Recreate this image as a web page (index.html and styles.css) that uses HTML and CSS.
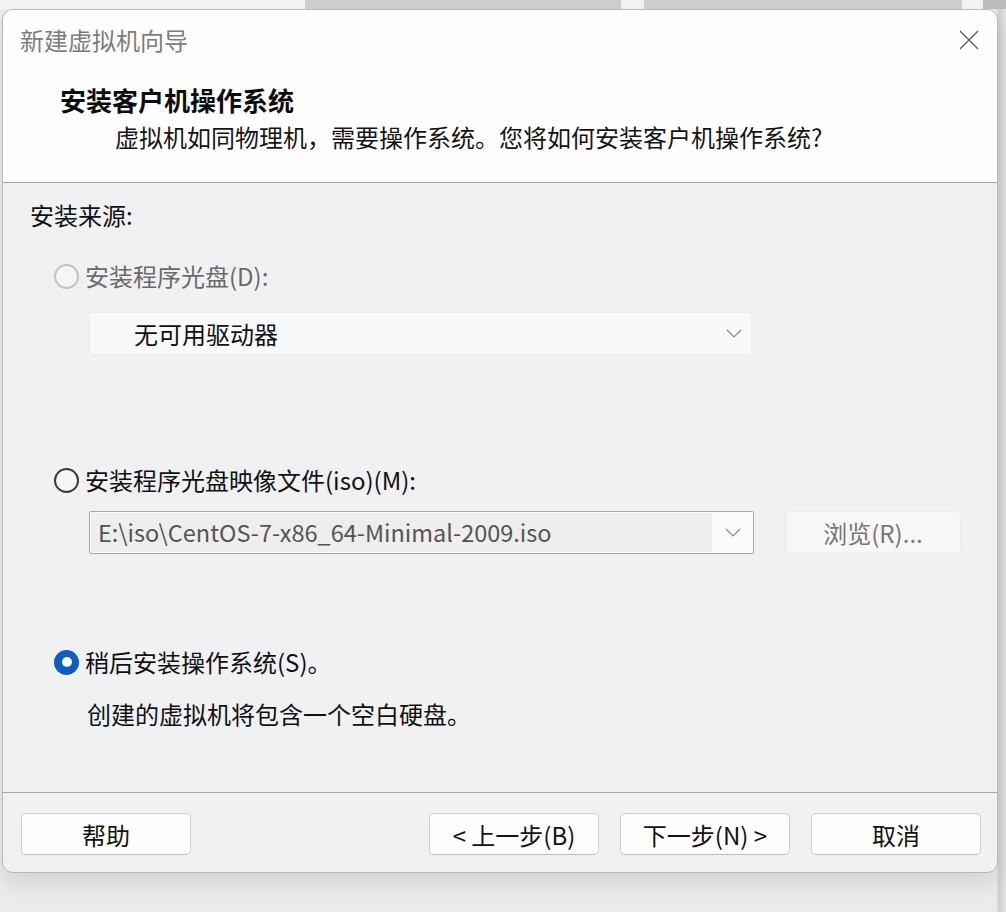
FILE: index.html
```html
<!DOCTYPE html>
<html lang="zh-CN">
<head>
<meta charset="utf-8">
<title>新建虚拟机向导</title>
<link rel="stylesheet" href="styles.css">
</head>
<body>
<div class="topstrip">
  <div class="strip-gap a"></div>
  <div class="strip-block b1"></div>
  <div class="strip-gap c"></div>
  <div class="strip-block b2"></div>
  <div class="strip-gap d"></div>
  <div class="strip-block b3"></div>
</div>
<div class="stage">
  <div class="dialog">
    <div class="header">
      <div class="titlebar">
        <span class="title">新建虚拟机向导</span>
        <svg class="close" width="20" height="20" viewBox="0 0 20 20"><path d="M1 1 L19 19 M19 1 L1 19" stroke="#5a5a5a" stroke-width="1.3" fill="none"/></svg>
      </div>
      <div class="heading">安装客户机操作系统</div>
      <div class="subtitle">虚拟机如同物理机，需要操作系统。您将如何安装客户机操作系统?</div>
    </div>
    <div class="body">
      <div class="section-label">安装来源:</div>
      <div class="radio-row r1">
        <span class="radio disabled"></span>
        <span class="radio-label muted">安装程序光盘(D):</span>
      </div>
      <div class="select disabled-select">
        <span class="select-text">无可用驱动器</span>
        <svg class="chev" width="16" height="9" viewBox="0 0 16 9"><path d="M1 1 L8 8 L15 1" stroke="#8a8a8a" stroke-width="1.2" fill="none"/></svg>
      </div>
      <div class="radio-row r2">
        <span class="radio"></span>
        <span class="radio-label">安装程序光盘映像文件(iso)(M):</span>
      </div>
      <div class="iso-row">
        <div class="combo">
          <span class="combo-text">E:\iso\CentOS-7-x86_64-Minimal-2009.iso</span>
          <span class="combo-btn"><svg width="16" height="9" viewBox="0 0 16 9"><path d="M1 1 L8 8 L15 1" stroke="#8a8a8a" stroke-width="1.2" fill="none"/></svg></span>
        </div>
        <div class="browse">浏览(R)...</div>
      </div>
      <div class="radio-row r3">
        <span class="radio checked"></span>
        <span class="radio-label">稍后安装操作系统(S)。</span>
      </div>
      <div class="desc">创建的虚拟机将包含一个空白硬盘。</div>
    </div>
    <div class="footer">
      <div class="btn">帮助</div>
      <div class="spacer"></div>
      <div class="btn">&lt; 上一步(B)</div>
      <div class="btn">下一步(N) &gt;</div>
      <div class="btn">取消</div>
    </div>
  </div>
</div>
</body>
</html>
```
FILE: styles.css
```css
html, body {
  margin: 0;
  padding: 0;
}
body {
  width: 1006px;
  height: 912px;
  overflow: hidden;
  background: #ebebeb;
  font-family: "Noto Sans CJK SC", "Noto Sans", sans-serif;
  color: #111;
}
.topstrip {
  display: flex;
  height: 9px;
  background: #f4f4f4;
}
.strip-gap.a { width: 305px; }
.strip-block.b1 { width: 316px; background: #cdcdcd; }
.strip-gap.c { width: 23px; }
.strip-block.b2 { width: 318px; background: #cdcdcd; }
.strip-gap.d { width: 21px; }
.strip-block.b3 { flex: 1; background: #bdbdbd; }

.stage {
  padding-left: 2px;
  background: linear-gradient(to right, #ebebeb 0, #ebebeb 996px, #cfcfcf 999px, #e4e4e4 1006px);
  height: 903px;
}
.dialog {
  box-sizing: border-box;
  width: 996px;
  height: 864px;
  border: 1px solid #b9b9b9;
  border-radius: 11px;
  overflow: hidden;
  background: #f0f1f3;
  box-shadow: 0 10px 22px rgba(0,0,0,0.10);
  display: flex;
  flex-direction: column;
}
.header {
  background: #fefefe;
  height: 173px;
  box-sizing: border-box;
  border-bottom: 1px solid #a4a4a4;
  flex: none;
}
.titlebar {
  display: flex;
  justify-content: space-between;
  align-items: center;
  padding: 14px 18px 0 17px;
  height: 32px;
}
.title {
  font-size: 24px;
  line-height: 32px;
  color: #7c7c7c;
}
.close { display: block; }
.heading {
  margin-top: 28px;
  padding-left: 57px;
  font-size: 26px;
  line-height: 32px;
  font-weight: 700;
  color: #0c0c0c;
}
.subtitle {
  margin-top: 5px;
  padding-left: 112px;
  font-size: 24px;
  line-height: 32px;
  color: #141414;
}
.body {
  flex: none;
  height: 610px;
  box-sizing: border-box;
  border-bottom: 1px solid #a8a8a8;
  padding-top: 16px;
  display: flex;
  flex-direction: column;
  align-items: flex-start;
}
.section-label {
  padding-left: 27px;
  font-size: 24px;
  line-height: 32px;
}
.radio-row {
  display: flex;
  align-items: center;
  height: 32px;
  padding-left: 51px;
}
.r1 { margin-top: 29px; }
.r2 { margin-top: 109px; }
.r3 { margin-top: 92px; }
.radio {
  box-sizing: border-box;
  width: 25px;
  height: 25px;
  border-radius: 50%;
  border: 2px solid #3a3a3a;
  background: #f6f6f6;
  flex: none;
  display: flex;
  align-items: center;
  justify-content: center;
}
.radio.disabled {
  border-color: #c2c2c2;
  background: #f5f5f5;
}
.radio.checked {
  border: none;
  background: #0d5dbf;
}
.radio.checked::after {
  content: "";
  width: 10px;
  height: 10px;
  border-radius: 50%;
  background: #ffffff;
}
.radio-label {
  margin-left: 6px;
  font-size: 24px;
  line-height: 32px;
  color: #111;
}
.radio-label.muted { color: #6a6a6a; }

.select {
  margin-top: 20px;
  margin-left: 86px;
  box-sizing: border-box;
  width: 663px;
  height: 43px;
  display: flex;
  align-items: center;
  justify-content: space-between;
  padding: 0 9px 0 44px;
  border-radius: 4px;
}
.disabled-select {
  background: #f8f9fa;
  border: 1px solid #ececee;
}
.select-text {
  font-size: 24px;
  line-height: 32px;
  color: #111;
}
.chev { display: block; }

.iso-row {
  margin-top: 15px;
  margin-left: 86px;
  display: flex;
  align-items: center;
  gap: 31px;
}
.combo {
  box-sizing: border-box;
  width: 665px;
  height: 43px;
  border: 1px solid #a9a9a9;
  border-radius: 2px;
  background: #fbfbfb;
  display: flex;
  align-items: stretch;
  padding: 1px;
}
.combo-text {
  flex: 1;
  background: #eeeeee;
  padding-left: 7px;
  font-size: 23.5px;
  line-height: 39px;
  color: #555;
  white-space: nowrap;
  overflow: hidden;
}
.combo-btn {
  width: 40px;
  display: flex;
  align-items: center;
  justify-content: center;
  background: #fbfbfb;
}
.combo-btn svg { display: block; margin-left: 2px; }
.browse {
  box-sizing: border-box;
  width: 176px;
  height: 43px;
  border: 1px solid #ebebeb;
  border-radius: 5px;
  background: #f7f7f8;
  display: flex;
  align-items: center;
  justify-content: center;
  font-size: 24px;
  color: #767676;
}
.desc {
  margin-top: 20px;
  padding-left: 84px;
  font-size: 24px;
  line-height: 32px;
  color: #111;
}
.footer {
  flex: 1;
  display: flex;
  align-items: flex-start;
  padding: 20px 16px 0 18px;
  gap: 21px;
}
.spacer { flex: 1; }
.btn {
  box-sizing: border-box;
  width: 170px;
  height: 42px;
  border: 1px solid #cfcfcf;
  border-bottom-color: #bdbdbd;
  border-radius: 5px;
  background: #fdfdfd;
  display: flex;
  align-items: center;
  justify-content: center;
  font-size: 24px;
  color: #111;
}
```
